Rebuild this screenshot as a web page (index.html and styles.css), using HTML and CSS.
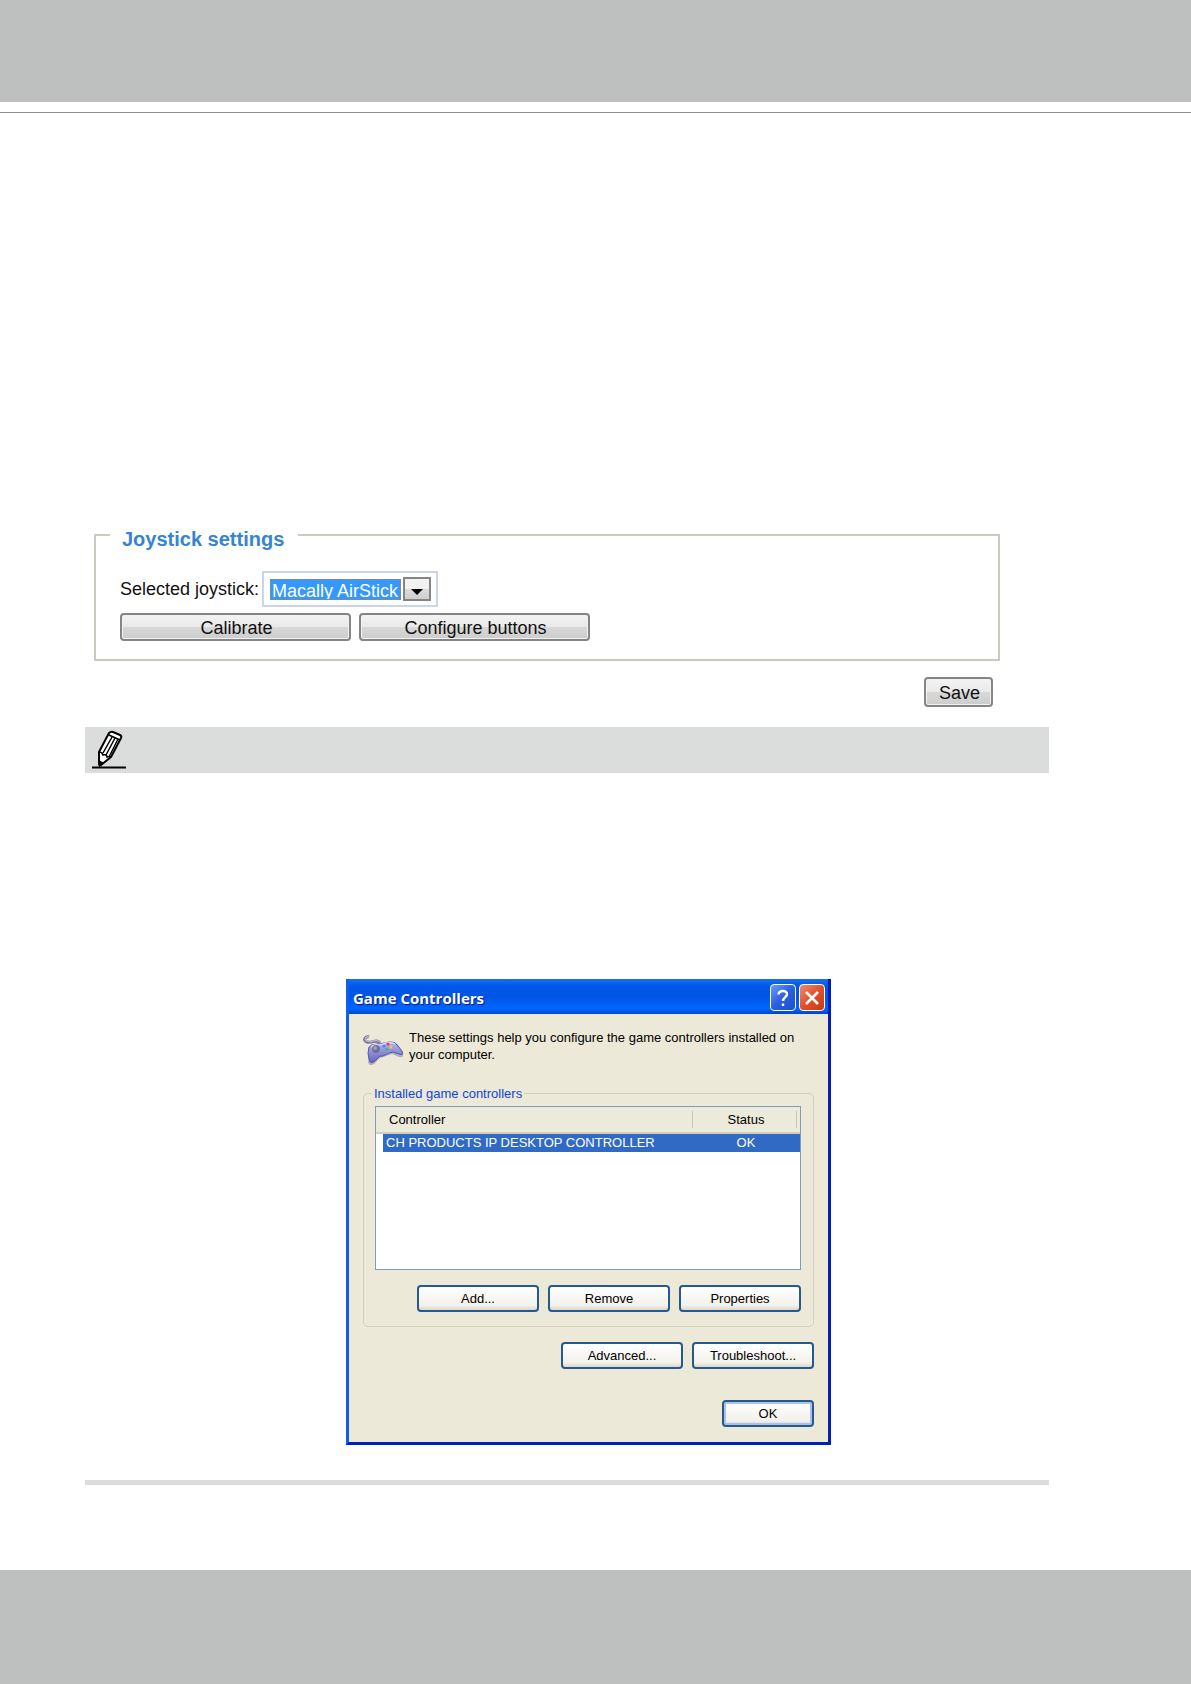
FILE: index.html
```html
<!DOCTYPE html>
<html lang="en">
<head>
    <meta charset="UTF-8">
    <meta name="viewport" content="width=device-width, initial-scale=1.0">
    <title>Joystick settings</title>
    <link rel="stylesheet" href="styles.css">
</head>
<body>

    <header class="page-header"></header>

    <main class="content">

        <!-- Joystick settings -->
        <form class="joystick-form">
            <fieldset class="joystick-settings">
                <legend>Joystick settings</legend>
                <div class="joystick-row">
                    <label for="joystick">Selected joystick:</label>
                    <div class="select-box">
                        <select id="joystick">
                            <option>Macally AirStick</option>
                        </select>
                        <span class="select-arrow">
                            <svg width="12" height="6" viewBox="0 0 12 6"><path d="M0 0h12L6 6z" fill="#000"/></svg>
                        </span>
                    </div>
                </div>
                <div class="button-row">
                    <button type="button" class="gray-btn wide">Calibrate</button>
                    <button type="button" class="gray-btn wide">Configure buttons</button>
                </div>
            </fieldset>
            <div class="save-row">
                <button type="button" class="gray-btn save">Save</button>
            </div>
        </form>

        <!-- Note -->
        <section class="note">
            <div class="note-bar">
                <svg width="36" height="40" viewBox="0 0 36 40">
                    <path d="M1 37.500h34" stroke="#000" stroke-width="2"/>
                    <path d="M8 22L18 3q2-2 4-1l7 3q2 1 1 3L20 27l-10 8q-2 1-2-1z" fill="#fff" stroke="#000" stroke-width="2" stroke-linejoin="round"/>
                    <path d="M8 22q3 0 4 3 4-1 4 2 3-1 4 0M12 23L21 7M15 25l9-17M18 27l9-18M18 5l11 5" fill="none" stroke="#000" stroke-width="1.500"/>
                    <path d="M8 30l5 3-5 4z"/>
                </svg>
            </div>

            <!-- Game Controllers dialog -->
            <div class="dialog">
                <div class="title-bar">
                    <h2>Game Controllers</h2>
                    <button type="button" class="title-btn" aria-label="Help">
                        <svg width="20" height="20" viewBox="0 0 20 20"><path d="M5.500 6.500C6 1.500 14.500 2 14 6.500c-.3 2.500-4 3-4 6.500M10 15.500v2.500" fill="none" stroke="#fff" stroke-width="2.400"/></svg>
                    </button>
                    <button type="button" class="title-btn close" aria-label="Close">
                        <svg width="20" height="20" viewBox="0 0 20 20"><path d="M4 4l12 12M16 4L4 16" stroke="#fff" stroke-width="2.600"/></svg>
                    </button>
                </div>
                <div class="dialog-body">
                    <div class="intro">
                        <svg width="42" height="34" viewBox="2 0 42 34">
                            <defs>
                                <linearGradient id="pad" x1="0" y1="0" x2="0" y2="1">
                                    <stop offset="0" stop-color="#b5b5f4"/>
                                    <stop offset="1" stop-color="#6565bd"/>
                                </linearGradient>
                            </defs>
                            <path d="M19 10c-4-5-8 1-13-1-5-2-1-6 2-5" fill="none" stroke="#77779a" stroke-width="3"/>
                            <path d="M19 9c-4-4-8 1-13-1-4-2 0-5 2-4" fill="none" stroke="#b3b3cb" stroke-width="1.500"/>
                            <path d="M10 15q4-4 9-3l12-2q5-1 7 4l4 7q1 4-4 3l-7-3-6 2-6 2-6 6q-5 3-6-2z" fill="#77778e" opacity=".5"/>
                            <path d="M8 14q2-3 8-3 4 0 7-1l6-1q5-1 8 4l4 5q2 5-3 3l-6-2q-5 1-8 3-3 2-5 1l-5 5q-5 4-6-2-2-5 0-12z" fill="url(#pad)" stroke="#5656aa"/>
                            <path d="M10 14q3-3 7-2 4 0 8-2 6-1 9 1" fill="none" stroke="#dadaff" stroke-width="1.500"/>
                            <circle cx="15" cy="16" r="4" fill="#6e7195"/>
                            <circle cx="14" cy="15" r="2" fill="#9a9eb4"/>
                            <circle cx="23" cy="13" r="1.500" fill="#3c8bff"/>
                            <circle cx="27" cy="11" r="1.500" fill="#e54130"/>
                            <circle cx="26" cy="16" r="1.500" fill="#42b96e"/>
                            <circle cx="30" cy="14" r="1.500" fill="#ffc629"/>
                        </svg>
                        <p>These settings help you configure the game controllers installed on your computer.</p>
                    </div>

                    <fieldset class="installed">
                        <legend>Installed game controllers</legend>
                        <div class="list">
                            <table>
                                <thead>
                                    <tr><th>Controller</th><th class="status">Status</th></tr>
                                </thead>
                                <tbody>
                                    <tr><td>CH PRODUCTS IP DESKTOP CONTROLLER</td><td class="status">OK</td></tr>
                                </tbody>
                            </table>
                        </div>
                        <div class="xp-buttons">
                            <button type="button" class="xp-btn">Add...</button>
                            <button type="button" class="xp-btn">Remove</button>
                            <button type="button" class="xp-btn">Properties</button>
                        </div>
                    </fieldset>

                    <div class="xp-buttons">
                        <button type="button" class="xp-btn">Advanced...</button>
                        <button type="button" class="xp-btn">Troubleshoot...</button>
                    </div>
                    <div class="xp-buttons confirm">
                        <button type="button" class="xp-btn default">OK</button>
                    </div>
                </div>
            </div>
        </section>
    </main>

    <footer class="page-footer"></footer>

</body>
</html>
```
FILE: styles.css
```css
* {
    margin: 0;
    padding: 0;
    box-sizing: border-box;
}

body {
    display: flex;
    flex-direction: column;
    min-height: 100vh;
    background: #fff;
    color: #111;
    font-family: "Liberation Sans", Arial, sans-serif;
    font-size: 18px;
}

/* Page bands */
.page-header {
    height: 113px;
    border-bottom: 1px solid #8c8e8d;
    background: linear-gradient(#bec0bf, #bec0bf) no-repeat 0 0 / 100% 102px;
}

.page-footer {
    height: 114px;
    margin-top: auto;
    background: #bec0bf;
}

.content {
    padding: 406px 142px 0 85px;
}

/* Joystick settings */
.joystick-form {
    padding: 0 49px 0 9px;
}

.joystick-settings {
    padding: 20px 24px 18px;
    border: 2px solid #cdc9c1;
}

.joystick-settings legend {
    margin-left: -10px;
    padding: 8px 14px 0 12px;
    color: #3584d4;
    font-size: 20px;
    font-weight: bold;
    line-height: 24px;
}

.joystick-row {
    display: flex;
    align-items: center;
    gap: 3px;
}

.select-box {
    display: flex;
    align-items: center;
    gap: 2px;
    height: 36px;
    padding: 0 5px 0 6px;
    border: 2px solid #cbd5e5;
}

.select-box select {
    width: 131px;
    height: 21px;
    padding: 2px 1px 0;
    appearance: none;
    border: 1px dotted #c77a35;
    border-radius: 0;
    background: #3399ff;
    color: #fff;
    font: inherit;
    line-height: 18px;
}

.select-arrow {
    display: flex;
    align-items: center;
    justify-content: center;
    width: 28px;
    height: 24px;
    padding-top: 6px;
    border: 2px solid #858585;
    background: linear-gradient(#f2f2f2 50%, #dcdcdc 50%, #cfcfcf);
}

.button-row {
    display: flex;
    gap: 8px;
    margin-top: 6px;
}

.gray-btn {
    height: 28px;
    padding: 2px 0 0 2px;
    border: 2px solid #858585;
    border-radius: 4px;
    background: linear-gradient(#f3f3f3, #e9e9e9 50%, #d8d8d8 50%, #cdcdcd);
    box-shadow: inset 0 0 0 1px #f2f2f2;
    color: #111;
    font: inherit;
    line-height: 22px;
}

.gray-btn.wide {
    width: 231px;
}

.save-row {
    display: flex;
    justify-content: flex-end;
    padding: 16px 7px 0 0;
}

.gray-btn.save {
    width: 69px;
    height: 30px;
}

/* Note */
.note {
    margin-top: 20px;
    padding-bottom: 35px;
    border-bottom: 5px solid #dbdddc;
}

.note-bar {
    height: 46px;
    padding: 3px 6px;
    background: #dbdddc;
}

/* Game Controllers dialog */
.dialog {
    width: 485px;
    margin: 206px 0 0 261px;
    border: 3px solid;
    border-color: #0a57e4 #001fbd #001fbd #125ee9;
    border-top: 0;
    background: #ece9d8;
    color: #000;
    font-size: 13px;
}

.title-bar {
    display: flex;
    align-items: center;
    gap: 3px;
    height: 35px;
    padding: 2px 3px 0 4px;
    background: linear-gradient(#1b70ed, #0058e6 20%, #0055e5 50%, #0066ff 85%, #0045c9);
}

.title-bar h2 {
    flex: 1;
    color: #fff;
    font-family: "Open Sans", sans-serif;
    font-size: 15px;
    text-shadow: 1px 1px 1px #0a1883;
}

.title-btn {
    display: flex;
    align-items: center;
    justify-content: center;
    width: 26px;
    height: 27px;
    border: 1px solid #fff;
    border-radius: 4px;
    background: linear-gradient(135deg, #6e9bf5, #2a5fe0 50%, #1c50cc);
}

.title-btn.close {
    background: linear-gradient(135deg, #ee8c70, #e0502c 50%, #c93a12);
}

.dialog-body {
    padding: 15px 14px 15px;
}

.intro {
    display: flex;
    gap: 4px;
    height: 56px;
}

.intro svg {
    flex: none;
    margin-top: 4px;
}

.intro p {
    line-height: 17px;
}

.installed {
    padding: 4px 12px 14px 11px;
    border: 1px solid #d0d0bf;
    border-radius: 5px;
}

.installed legend {
    margin-left: -3px;
    padding: 0 2px;
    color: #0f47d2;
    line-height: 17px;
}

.list {
    height: 164px;
    border: 1px solid #7f9db9;
    background: #fff;
}

.list table {
    width: 100%;
    border-spacing: 0;
    line-height: 18px;
    text-align: left;
}

.list th {
    height: 27px;
    padding: 0 13px;
    border-bottom: 2px solid #d3cfbf;
    background: #ebeadb;
    font-weight: normal;
}

.list td {
    padding: 0 3px;
    background: #316ac5;
    color: #fff;
}

.list td:first-child {
    border-left: 7px solid #fff;
}

.list .status {
    width: 108px;
    text-align: center;
}

/* Column dividers that stop short of the header's edges */
.list th.status {
    background:
        linear-gradient(#c7c5b2, #c7c5b2) no-repeat 0 50% / 1px 17px,
        linear-gradient(#c7c5b2, #c7c5b2) no-repeat 104px 50% / 1px 17px,
        #ebeadb;
}

.xp-buttons {
    display: flex;
    justify-content: flex-end;
    gap: 9px;
    margin-top: 15px;
}

.xp-buttons.confirm {
    margin-top: 31px;
}

.xp-btn {
    width: 122px;
    height: 27px;
    border: 2px solid #275a8c;
    border-radius: 4px;
    background: linear-gradient(#fff, #f2f1eb 80%, #dcd7cb);
    color: #000;
    font: inherit;
}

.xp-btn.default {
    width: 92px;
    box-shadow: inset 0 0 0 2px #a9c2ef;
}
```
